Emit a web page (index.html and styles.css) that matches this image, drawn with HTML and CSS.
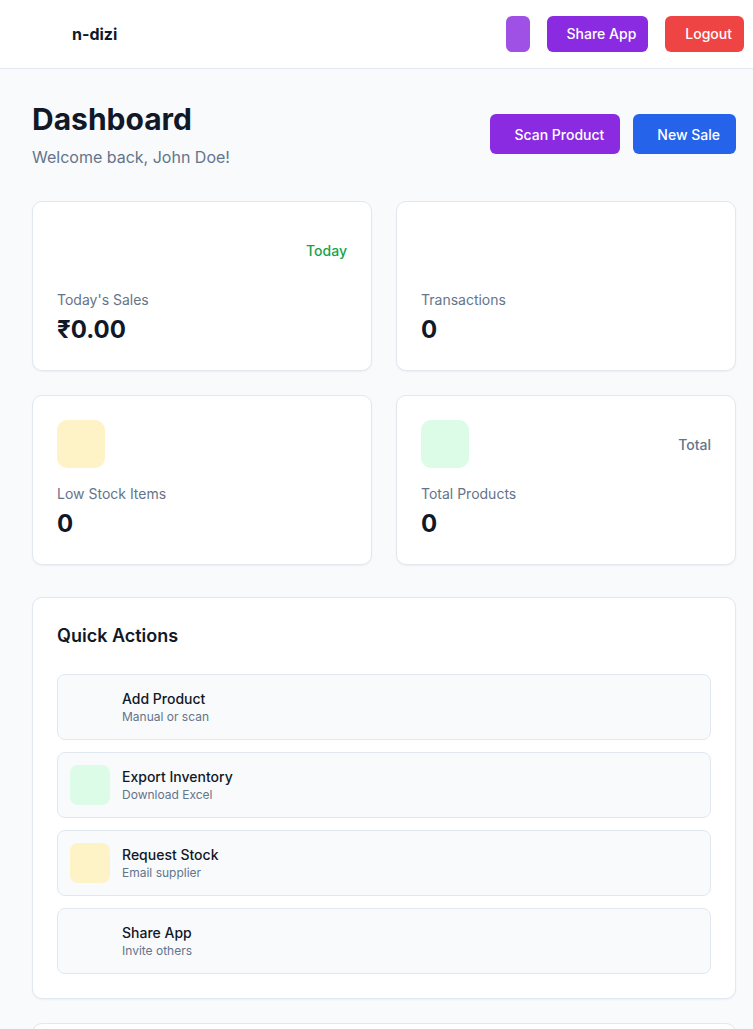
FILE: index.html
```html
<!DOCTYPE html>
<html lang="en">
<head>
<meta charset="utf-8">
<title>n-dizi Dashboard</title>
<link rel="stylesheet" href="styles.css">
</head>
<body>
<div class="app">
  <header class="topbar">
    <div class="brand">
      <span class="brand-logo"></span>
      <span class="brand-name">n-dizi</span>
    </div>
    <div class="top-actions">
      <button class="btn btn-icon-only"></button>
      <button class="btn btn-purple">Share App</button>
      <button class="btn btn-red">Logout</button>
    </div>
  </header>

  <main class="main">
    <section class="page-head">
      <div>
        <h1 class="title">Dashboard</h1>
        <p class="subtitle">Welcome back, John Doe!</p>
      </div>
      <div class="head-actions">
        <button class="btn btn-lg btn-purple">Scan Product</button>
        <button class="btn btn-lg btn-blue">New Sale</button>
      </div>
    </section>

    <section class="stats">
      <div class="card stat">
        <div class="stat-top">
          <span class="stat-icon"></span>
          <span class="stat-tag tag-green">Today</span>
        </div>
        <div class="stat-label">Today's Sales</div>
        <div class="stat-value">₹0.00</div>
      </div>
      <div class="card stat">
        <div class="stat-top">
          <span class="stat-icon"></span>
        </div>
        <div class="stat-label">Transactions</div>
        <div class="stat-value">0</div>
      </div>
      <div class="card stat">
        <div class="stat-top">
          <span class="stat-icon icon-yellow"></span>
        </div>
        <div class="stat-label">Low Stock Items</div>
        <div class="stat-value">0</div>
      </div>
      <div class="card stat">
        <div class="stat-top">
          <span class="stat-icon icon-green"></span>
          <span class="stat-tag tag-gray">Total</span>
        </div>
        <div class="stat-label">Total Products</div>
        <div class="stat-value">0</div>
      </div>
    </section>

    <section class="card panel">
      <h2 class="panel-title">Quick Actions</h2>
      <div class="actions">
        <div class="action">
          <span class="action-icon"></span>
          <div class="action-text">
            <div class="action-title">Add Product</div>
            <div class="action-sub">Manual or scan</div>
          </div>
        </div>
        <div class="action">
          <span class="action-icon icon-green"></span>
          <div class="action-text">
            <div class="action-title">Export Inventory</div>
            <div class="action-sub">Download Excel</div>
          </div>
        </div>
        <div class="action">
          <span class="action-icon icon-yellow"></span>
          <div class="action-text">
            <div class="action-title">Request Stock</div>
            <div class="action-sub">Email supplier</div>
          </div>
        </div>
        <div class="action">
          <span class="action-icon"></span>
          <div class="action-text">
            <div class="action-title">Share App</div>
            <div class="action-sub">Invite others</div>
          </div>
        </div>
      </div>
    </section>

    <section class="card panel panel-next"></section>
  </main>
</div>
</body>
</html>
```

FILE: styles.css
```css
* { box-sizing: border-box; }

html, body {
  margin: 0;
  padding: 0;
  overflow-x: hidden;
  background: #f8fafc;
  font-family: Inter, "Liberation Sans", sans-serif;
  color: #111827;
}

.app {
  width: 768px;
}

.topbar {
  height: 69px;
  background: #ffffff;
  border-bottom: 1px solid #e2e8f0;
  display: flex;
  align-items: center;
  justify-content: space-between;
  padding: 0 24px;
}

.brand {
  display: flex;
  align-items: center;
  gap: 8px;
}

.brand-logo {
  width: 40px;
  height: 40px;
}

.brand-name {
  font-size: 16px;
  font-weight: 700;
  color: #111827;
}

.top-actions {
  display: flex;
  align-items: center;
  gap: 17px;
  margin-top: -1px;
}

.btn {
  border: none;
  border-radius: 6px;
  height: 36px;
  padding: 0 12px 0 20px;
  font-family: inherit;
  font-size: 14px;
  font-weight: 500;
  color: #ffffff;
  cursor: pointer;
}

.btn-icon-only {
  width: 24px;
  padding: 0;
  background: #9f51e5;
  margin-left: 2px;
}

.btn-purple { background: #8a2be2; }
.btn-red { background: #ef4444; }
.btn-blue { background: #2563eb; }

.btn-lg {
  height: 40px;
  padding: 0 16px 0 24px;
  font-size: 14px;
}

.main {
  padding: 32px;
}

.page-head {
  display: flex;
  align-items: center;
  justify-content: space-between;
  margin-bottom: 32px;
}

.title {
  margin: 0;
  font-size: 30px;
  line-height: 36px;
  font-weight: 700;
  color: #111827;
}

.subtitle {
  margin: 8px 0 0;
  font-size: 16px;
  line-height: 24px;
  color: #64748b;
}

.head-actions {
  display: flex;
  gap: 13px;
  margin-top: -2px;
}

.card {
  background: #ffffff;
  border: 1px solid #e2e8f0;
  border-radius: 10px;
  box-shadow: 0 1px 2px rgba(15, 23, 42, 0.05);
}

.stats {
  display: grid;
  grid-template-columns: 1fr 1fr;
  gap: 24px;
  margin-bottom: 32px;
}

.stat {
  padding: 24px;
}

.stat-top {
  display: flex;
  align-items: center;
  justify-content: space-between;
  height: 48px;
  margin-bottom: 16px;
}

.stat-icon {
  width: 48px;
  height: 48px;
  border-radius: 10px;
}

.icon-yellow { background: #fef3c7; }
.icon-green { background: #dcfce7; }

.stat-tag {
  font-size: 14px;
  font-weight: 500;
}

.tag-green { color: #16a34a; }
.tag-gray { color: #64748b; }

.stat-label {
  font-size: 14px;
  line-height: 20px;
  color: #64748b;
}

.stat-value {
  margin-top: 4px;
  font-size: 24px;
  line-height: 32px;
  font-weight: 700;
  color: #111827;
}

.panel {
  padding: 24px;
  margin-bottom: 24px;
}

.panel-title {
  margin: 0 0 24px;
  font-size: 18px;
  line-height: 28px;
  font-weight: 600;
  color: #111827;
}

.actions {
  display: flex;
  flex-direction: column;
  gap: 12px;
}

.action {
  display: flex;
  align-items: center;
  gap: 12px;
  padding: 12px;
  background: #f8fafc;
  border: 1px solid #e2e8f0;
  border-radius: 8px;
}

.action-icon {
  width: 40px;
  height: 40px;
  border-radius: 8px;
  flex: none;
}

.action-title {
  font-size: 14px;
  line-height: 20px;
  font-weight: 500;
  color: #111827;
}

.action-sub {
  font-size: 12px;
  line-height: 16px;
  color: #64748b;
}

.panel-next {
  height: 200px;
}
```
